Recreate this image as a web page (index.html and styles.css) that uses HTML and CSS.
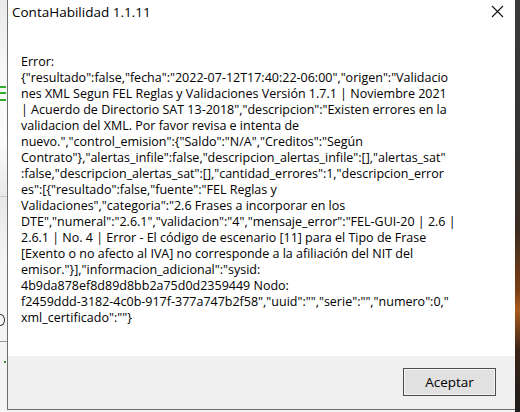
FILE: index.html
```html
<!DOCTYPE html>
<html lang="es">
<head>
<meta charset="utf-8">
<title>ContaHabilidad 1.1.11</title>
<link rel="stylesheet" href="styles.css">
</head>
<body>
<div class="screen">
  <div class="backdrop-left">
    <span class="green g1"></span>
    <span class="green g2"></span>
    <span class="green g3"></span>
    <span class="bg-line l1"></span>
    <span class="bg-ring"></span>
    <span class="bg-line l2"></span>
    <span class="bg-dot"></span>
  </div>
  <div class="dialog">
    <div class="titlebar">
      <span class="title">ContaHabilidad 1.1.11</span>
      <span class="close" aria-label="Cerrar">
        <svg width="13" height="13" viewBox="0 0 13 13"><path d="M1 1 L12 12 M12 1 L1 12" stroke="#111" stroke-width="1.1" fill="none"/></svg>
      </span>
    </div>
    <div class="content">
      <div class="message">
        <div class="line">Error:</div>
        <div class="line">{"resultado":false,"fecha":"2022-07-12T17:40:22-06:00","origen":"Validacio</div>
        <div class="line">nes XML Segun FEL Reglas y Validaciones Versión 1.7.1 | Noviembre 2021</div>
        <div class="line">| Acuerdo de Directorio SAT 13-2018","descripcion":"Existen errores en la</div>
        <div class="line">validacion del XML. Por favor revisa e intenta de</div>
        <div class="line">nuevo.","control_emision":{"Saldo":"N/A","Creditos":"Según</div>
        <div class="line">Contrato"},"alertas_infile":false,"descripcion_alertas_infile":[],"alertas_sat"</div>
        <div class="line">:false,"descripcion_alertas_sat":[],"cantidad_errores":1,"descripcion_error</div>
        <div class="line">es":[{"resultado":false,"fuente":"FEL Reglas y</div>
        <div class="line">Validaciones","categoria":"2.6 Frases a incorporar en los</div>
        <div class="line">DTE","numeral":"2.6.1","validacion":"4","mensaje_error":"FEL-GUI-20 | 2.6 |</div>
        <div class="line">2.6.1 | No. 4 | Error - El código de escenario [11] para el Tipo de Frase</div>
        <div class="line">[Exento o no afecto al IVA] no corresponde a la afiliación del NIT del</div>
        <div class="line">emisor."}],"informacion_adicional":"sysid:</div>
        <div class="line">4b9da878ef8d89d8bb2a75d0d2359449 Nodo:</div>
        <div class="line">f2459ddd-3182-4c0b-917f-377a747b2f58","uuid":"","serie":"","numero":0,"</div>
        <div class="line">xml_certificado":""}</div>
      </div>
    </div>
    <div class="footer">
      <button class="btn">Aceptar</button>
    </div>
  </div>
  <div class="backdrop-right"></div>
</div>
</body>
</html>
```

FILE: styles.css
```css
html, body {
  margin: 0;
  padding: 0;
}
body {
  width: 520px;
  height: 412px;
  overflow: hidden;
  background: #f3f3f3;
  font-family: "Open Sans", "Noto Sans", "DejaVu Sans", sans-serif;
  color: #000;
}
.screen {
  display: flex;
  width: 520px;
  height: 412px;
}
.backdrop-left {
  position: relative;
  width: 7px;
  flex: none;
  background: linear-gradient(#e9e9e9 0, #f6f6f6 60px, #fbfbfb 140px, #e8e8e8 200px, #f4f4f4 260px, #f4f4f4 412px);
  overflow: hidden;
}
.green {
  position: absolute;
  left: 0;
  width: 6px;
  height: 2px;
  background: #2fae2f;
}
.g1 { top: 86px; }
.g2 { top: 92px; }
.g3 { top: 99px; }
.bg-line {
  position: absolute;
  left: 0;
  width: 7px;
  height: 1px;
  background: #9a9a9a;
}
.l1 { top: 196px; background: #c8c8c8; }
.l2 { top: 341px; }
.bg-ring {
  position: absolute;
  left: -4px;
  top: 314px;
  width: 7px;
  height: 10px;
  border: 1.5px solid #333;
  border-radius: 50%;
}
.bg-dot {
  position: absolute;
  left: 4px;
  top: 361px;
  width: 2px;
  height: 2px;
  background: #3f8f3f;
}
.dialog {
  width: 507px;
  height: 409px;
  flex: none;
  display: flex;
  flex-direction: column;
  border-left: 1px solid #6f6f6f;
  border-bottom: 1px solid #6f6f6f;
  background: #fff;
}
.titlebar {
  height: 23px;
  flex: none;
  display: flex;
  align-items: center;
  justify-content: space-between;
  padding: 0 11px 0 4px;
}
.title {
  font-size: 13.5px;
}
.close {
  display: flex;
}
.content {
  flex: 1;
  padding: 31px 0 0 13px;
}
.message {
  font-size: 12.5px;
  line-height: 16px;
}
.line {
  white-space: nowrap;
}
.footer {
  height: 53px;
  flex: none;
  background: #f0f0f0;
  display: flex;
  justify-content: flex-end;
  align-items: flex-start;
  padding: 12px 19px 0 0;
  box-sizing: border-box;
}
.btn {
  width: 93px;
  height: 28px;
  font-family: inherit;
  font-size: 13.5px;
  color: #000;
  background: #e1e1e1;
  border: 1px solid #4d4d4d;
  box-shadow: inset 0 0 0 1px #f4f4f4;
  padding: 0;
}
.backdrop-right {
  width: 5px;
  flex: none;
  height: 412px;
  background: linear-gradient(#3a3a3a 0, #333 150px, #3b2c22 230px, #7a3e14 290px, #a85a1e 310px, #3a2418 350px, #1c1c1c 412px);
}
```
